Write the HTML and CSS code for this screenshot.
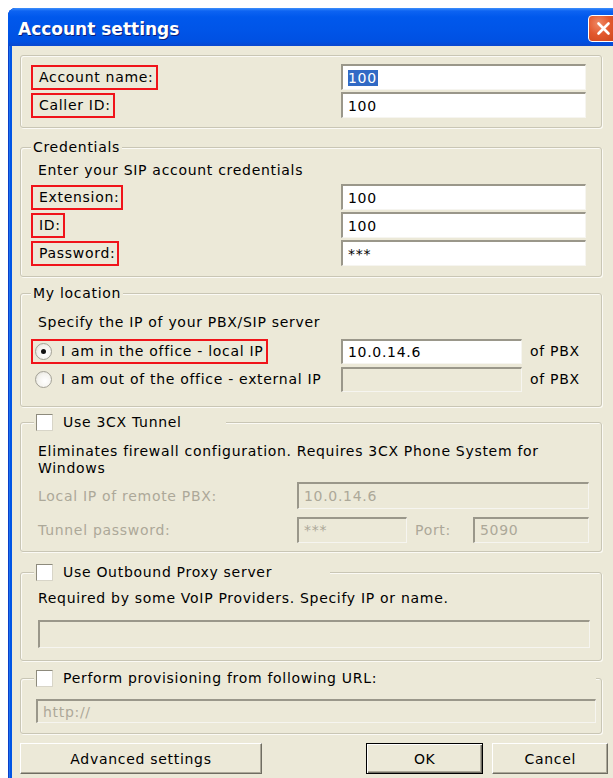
FILE: index.html
```html
<!DOCTYPE html>
<html lang="en">
<head>
<meta charset="utf-8">
<title>Account settings</title>
<link rel="stylesheet" href="styles.css">
</head>
<body>
<div class="window">
  <div class="titlebar">
    <span class="title">Account settings</span>
    <span class="close-btn" aria-label="Close">
      <svg width="15" height="15" viewBox="0 0 15 15"><path d="M2.5 2.5 L12.5 12.5 M12.5 2.5 L2.5 12.5" stroke="#fff" stroke-width="2.6" stroke-linecap="round"/></svg>
    </span>
  </div>

  <div class="client">
    <fieldset class="group group-account">
      <div class="rows">
        <div class="row">
          <span class="label"><span class="mark">Account name:</span></span>
          <span class="field"><span class="selected">100</span></span>
        </div>
        <div class="row">
          <span class="label"><span class="mark">Caller ID:</span></span>
          <span class="field">100</span>
        </div>
      </div>
    </fieldset>

    <fieldset class="group group-credentials">
      <legend class="caption">Credentials</legend>
      <p class="hint">Enter your SIP account credentials</p>
      <div class="rows">
        <div class="row">
          <span class="label"><span class="mark">Extension:</span></span>
          <span class="field">100</span>
        </div>
        <div class="row">
          <span class="label"><span class="mark">ID:</span></span>
          <span class="field">100</span>
        </div>
        <div class="row">
          <span class="label"><span class="mark">Password:</span></span>
          <span class="field">***</span>
        </div>
      </div>
    </fieldset>

    <fieldset class="group group-location">
      <legend class="caption">My location</legend>
      <p class="hint">Specify the IP of your PBX/SIP server</p>
      <div class="rows">
        <div class="row row-location">
          <span class="label"><span class="option marked"><span class="radio checked"></span>I am in the office - local IP</span></span>
          <span class="field field-ip">10.0.14.6</span>
          <span class="suffix">of PBX</span>
        </div>
        <div class="row row-location">
          <span class="label"><span class="option"><span class="radio"></span>I am out of the office - external IP</span></span>
          <span class="field field-ip disabled"></span>
          <span class="suffix">of PBX</span>
        </div>
      </div>
    </fieldset>

    <fieldset class="group group-tunnel">
      <legend class="check-caption caption-tunnel"><span class="checkbox"></span>Use 3CX Tunnel</legend>
      <div class="indent">
        <p class="hint-multi">Eliminates firewall configuration. Requires 3CX Phone System for Windows</p>
        <div class="tunnel-rows">
          <div class="tunnel-row">
            <span class="muted">Local IP of remote PBX:</span>
            <span class="field disabled field-remote">10.0.14.6</span>
          </div>
          <div class="tunnel-row">
            <span class="muted">Tunnel password:</span>
            <span class="field disabled field-pass">***</span>
            <span class="muted port-label">Port:</span>
            <span class="field disabled field-port">5090</span>
          </div>
        </div>
      </div>
    </fieldset>

    <fieldset class="group group-proxy">
      <legend class="check-caption caption-proxy"><span class="checkbox"></span>Use Outbound Proxy server</legend>
      <div class="indent">
        <p class="hint-multi proxy-hint">Required by some VoIP Providers. Specify IP or name.</p>
        <span class="field disabled field-proxy"></span>
      </div>
    </fieldset>

    <fieldset class="group group-provision">
      <legend class="check-caption caption-provision"><span class="checkbox"></span>Perform provisioning from following URL:</legend>
      <span class="field disabled field-url">http://</span>
    </fieldset>

    <div class="footer">
      <button class="btn btn-advanced">Advanced settings</button>
      <button class="btn btn-ok">OK</button>
      <button class="btn btn-cancel">Cancel</button>
    </div>
  </div>
</div>
</body>
</html>
```

FILE: styles.css
```css
* {
  box-sizing: border-box;
}

html,
body {
  margin: 0;
  padding: 0;
}

body {
  width: 613px;
  height: 778px;
  overflow: hidden;
  background: #ffffff;
  font-family: "DejaVu Sans", Verdana, sans-serif;
  font-size: 14px;
  letter-spacing: 0.7px;
  color: #000;
}

/* dialog frame */
.window {
  margin: 8px 0 0 8px;
  width: 612px;
  min-height: 770px;
  padding: 0 4px;
  border-radius: 8px 8px 0 0;
  background: #0055e5;
  box-shadow: inset 1px 0 0 #0a3fc8, inset 2px 0 0 #1a6ff0;
  display: flex;
  flex-direction: column;
}

.titlebar {
  height: 38px;
  margin: 0 -4px;
  padding: 0 2px 0 10px;
  border-radius: 8px 8px 0 0;
  display: flex;
  align-items: center;
  justify-content: space-between;
  background: linear-gradient(#3d8ffb 0, #0d63f2 3px, #0058ec 9px, #0055e8 55%, #0050e2 88%, #0a48cf 100%);
}

.title {
  margin-top: 3px;
  font-weight: bold;
  font-size: 17px;
  letter-spacing: 0;
  color: #fff;
  text-shadow: 1px 1px 0 #0a1e78;
}

.close-btn {
  width: 30px;
  height: 27px;
  margin-top: 3px;
  border: 1px solid #fff;
  border-radius: 4px;
  background: radial-gradient(circle at 35% 30%, #f08a66 0, #e2582e 45%, #c9431a 100%);
  display: flex;
  align-items: center;
  justify-content: center;
}

.client {
  flex: 1;
  background: #ece9d8;
  padding: 9px 8px 5px 8px;
}

/* group boxes */
.group {
  width: 582px;
  min-width: 0;
  margin: 0;
  padding: 0 10px 10px 10px;
  border: 1px solid #c9c6b5;
  border-radius: 3px;
  box-shadow: inset 1px 1px 0 #fbfaf5, 1px 1px 0 #fbfaf5;
}

.caption {
  padding: 0 2px;
  line-height: 16px;
  background: #ece9d8;
}

.check-caption {
  margin-left: 3px;
  padding: 0 2px;
  height: 18px;
  display: flex;
  align-items: center;
  gap: 10px;
  background: #ece9d8;
}

.caption-tunnel { width: 192px; }
.caption-proxy { width: 296px; }
.caption-provision { width: 562px; }

.checkbox {
  width: 17px;
  height: 17px;
  flex: none;
  background: #fff;
  border: 1px solid;
  border-color: #8d8a7c #d8d5c8 #d8d5c8 #8d8a7c;
}

.hint {
  margin: 0 0 0 7px;
  line-height: 16px;
}

.hint-multi {
  margin: 0;
  line-height: 17px;
}

.group-account {
  padding-top: 8px;
  padding-bottom: 9px;
}

.group-credentials {
  margin-top: 11px;
  padding-bottom: 10px;
}

.group-credentials .hint {
  margin-top: 7px;
}

.group-credentials .rows {
  margin-top: 6px;
}

.group-location {
  margin-top: 8px;
  padding-bottom: 14px;
}

.group-location .hint {
  margin-top: 13px;
}

.group-location .rows {
  margin-top: 8px;
}

.group-tunnel {
  margin-top: 6px;
  padding-bottom: 8px;
}

.group-tunnel .indent {
  padding-top: 12px;
}

.group-proxy {
  margin-top: 11px;
  padding-bottom: 12px;
}

.group-proxy .indent {
  padding-top: 9px;
}

.group-provision {
  margin-top: 8px;
  padding-top: 12px;
  padding-bottom: 10px;
}

.indent {
  padding-left: 7px;
}

/* label / field rows */
.rows {
  display: flex;
  flex-direction: column;
  gap: 2px;
}

.row {
  display: grid;
  grid-template-columns: 310px 245px;
  height: 26px;
  align-items: center;
}

.row-location {
  grid-template-columns: 310px 181px auto;
}

.mark {
  display: inline-block;
  height: 25px;
  line-height: 21px;
  padding: 0 2px 0 6px;
  border: 2px solid #f0141a;
}

.option {
  display: inline-flex;
  align-items: center;
  gap: 9px;
  height: 25px;
  padding: 0 3px 0 2px;
  border: 2px solid transparent;
}

.option.marked {
  border-color: #f0141a;
}

.radio {
  position: relative;
  width: 17px;
  height: 17px;
  flex: none;
  border-radius: 50%;
  border: 1px solid #a3a196;
  background: radial-gradient(circle at 60% 60%, #ffffff 0, #f4f3ee 55%, #d9d7cd 100%);
}

.radio.checked::after {
  content: "";
  position: absolute;
  left: 5px;
  top: 5px;
  width: 5px;
  height: 5px;
  border-radius: 50%;
  background: #111;
}

.suffix {
  padding-left: 8px;
}

.field {
  display: flex;
  align-items: center;
  height: 26px;
  padding-left: 5px;
  background: #fff;
  border-style: solid;
  border-width: 2px 1px 1px 2px;
  border-color: #9a978a #f6f5f0 #f6f5f0 #9a978a;
  white-space: nowrap;
}

.field-ip {
  height: 25px;
}

.field.disabled {
  background: #ece9d8;
  color: #aca899;
}

.selected {
  background: #316ac5;
  color: #fff;
  padding-right: 1px;
}

.muted {
  color: #aca899;
}

.tunnel-rows {
  margin-top: 5px;
  display: flex;
  flex-direction: column;
  gap: 7px;
}

.tunnel-row {
  display: flex;
  align-items: center;
  height: 27px;
}

.tunnel-row > .muted:first-child {
  width: 259px;
}

.field-remote {
  width: 292px;
  height: 27px;
}

.field-pass {
  width: 110px;
}

.port-label {
  width: 66px;
  padding-left: 8px;
}

.field-port {
  width: 116px;
}

.field-proxy {
  margin-top: 13px;
  width: 552px;
  height: 28px;
}

.field-url {
  margin-left: 5px;
  width: 560px;
  height: 24px;
}

/* dialog buttons */
.footer {
  display: flex;
  margin-top: 9px;
}

.btn {
  height: 31px;
  padding: 0;
  font: inherit;
  letter-spacing: inherit;
  color: #000;
  background: #ece9d8;
  border: 1px solid;
  border-color: #fff #6f6d62 #6f6d62 #fff;
  box-shadow: inset -1px -1px 0 #aca899;
}

.btn-advanced {
  width: 245px;
}

.btn-ok {
  width: 119px;
  margin-left: 104px;
  border-color: #000;
  box-shadow: inset 1px 1px 0 #fff, inset -1px -1px 0 #6f6d62, inset -2px -2px 0 #aca899;
}

.btn-cancel {
  width: 117px;
  margin-left: 9px;
}
```
